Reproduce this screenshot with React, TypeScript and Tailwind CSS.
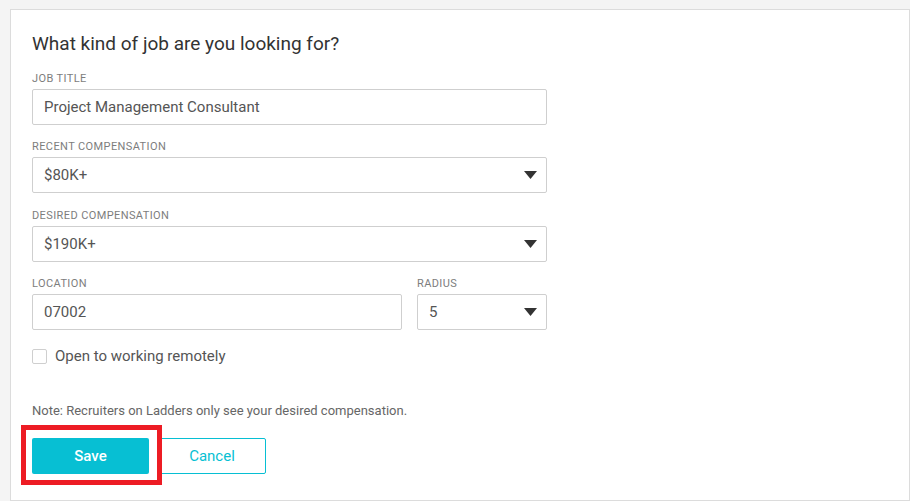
import { useState } from 'react';

const Caret = () => (
  <svg width="13" height="8" viewBox="0 0 13 8" className="shrink-0">
    <path d="M0 0 L13 0 L6.5 8 Z" fill="#333" />
  </svg>
);

function Label({ children }: { children: string }) {
  return (
    <div className="mb-[3px] text-[11px] leading-[15px] tracking-[0.4px] text-[#7d7d7d] uppercase">
      {children}
    </div>
  );
}

function Field({ value }: { value: string }) {
  return (
    <div className="flex h-[36px] items-center rounded-[2px] border border-[#cfcfcf] bg-white px-[11px] text-[15px] text-[#555]">
      {value}
    </div>
  );
}

function Select({ value }: { value: string }) {
  return (
    <div className="flex h-[36px] items-center justify-between rounded-[2px] border border-[#cfcfcf] bg-white pl-[11px] pr-[9px] text-[15px] text-[#555]">
      <span>{value}</span>
      <Caret />
    </div>
  );
}

export default function App() {
  const [remote, setRemote] = useState(false);

  return (
    <div
      className="h-[501px] bg-[#f4f4f4] pt-[9px] pl-[10px]"
      style={{ fontFamily: 'Roboto, "Liberation Sans", sans-serif' }}
    >
      <div className="relative h-[492px] border border-[#dcdcdc] bg-white pt-[22px] pl-[21px]">
        <div className="w-[515px]">
          <h1 className="mb-[15px] text-[19px] leading-[24px] text-[#333]">What kind of job are you looking for?</h1>

          <Label>Job Title</Label>
          <Field value="Project Management Consultant" />

          <div className="mt-[14px]">
            <Label>Recent Compensation</Label>
            <Select value="$80K+" />
          </div>

          <div className="mt-[15px]">
            <Label>Desired Compensation</Label>
            <Select value="$190K+" />
          </div>

          <div className="mt-[14px] flex gap-[15px]">
            <div className="w-[370px]">
              <Label>Location</Label>
              <Field value="07002" />
            </div>
            <div className="flex-1">
              <Label>Radius</Label>
              <Select value="5" />
            </div>
          </div>

          <label className="mt-[18px] flex cursor-pointer items-center gap-[8px] text-[15px] leading-[16px] text-[#555]">
            <span
              onClick={() => setRemote(!remote)}
              className="h-[15px] w-[15px] rounded-[2px] border border-[#cfcfcf] bg-white"
            />
            Open to working remotely
          </label>

          <p className="mt-[38px] text-[13px] leading-[18px] text-[#666]">
            Note: Recruiters on Ladders only see your desired compensation.
          </p>

          <div className="relative mt-[18px] flex gap-[9px]">
            <button className="h-[36px] w-[117px] rounded-[2px] bg-[#07bfd3] text-[15px] font-medium text-white">
              Save
            </button>
            <button className="h-[36px] w-[108px] rounded-[2px] border border-[#07bfd3] bg-white text-[15px] text-[#07bfd3]">
              Cancel
            </button>
            <div className="pointer-events-none absolute top-[-13px] left-[-11px] h-[60px] w-[141px] border-[5px] border-[#ed1c24]" />
          </div>
        </div>
      </div>
    </div>
  );
}
